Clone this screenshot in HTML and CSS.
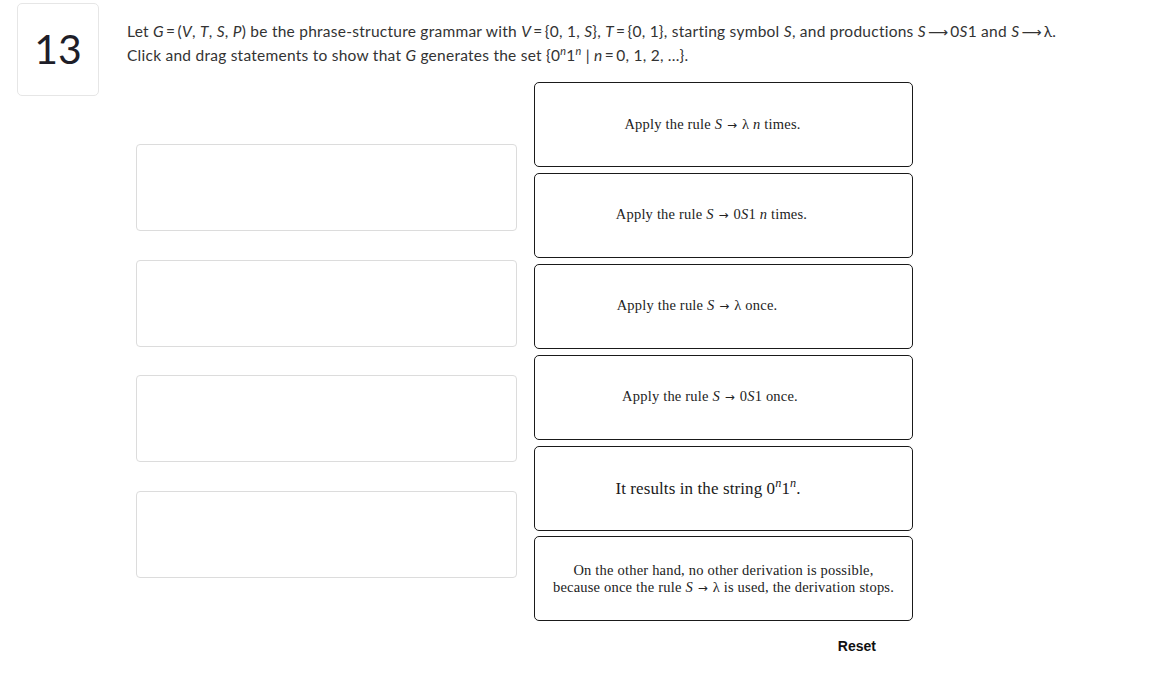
FILE: index.html
```html
<!DOCTYPE html>
<html lang="en">
<head>
<meta charset="utf-8">
<title>Question 13</title>
<link rel="stylesheet" href="styles.css">
</head>
<body>
<div class="page">
  <div class="qnum">13</div>
  <div class="content">
    <div class="prompt">
      <p>Let <i>G</i>&#8201;=&#8201;(<i>V</i>, <i>T</i>, <i>S</i>, <i>P</i>) be the phrase-structure grammar with <i>V</i>&#8201;=&#8201;{0, 1, <i>S</i>}, <i>T</i>&#8201;=&#8201;{0, 1}, starting symbol <i>S</i>, and productions <i>S</i>&#8201;<span class="arrow">⟶</span>&#8201;0<i>S</i>1 and <i>S</i>&#8201;<span class="arrow">⟶</span>&#8201;λ.</p>
      <p>Click and drag statements to show that <i>G</i> generates the set {0<sup><i>n</i></sup>1<sup><i>n</i></sup> | <i>n</i>&#8201;=&#8201;0, 1, 2, ...}.</p>
    </div>
    <div class="workspace">
      <div class="targets">
        <div class="slot"></div>
        <div class="slot"></div>
        <div class="slot"></div>
        <div class="slot"></div>
      </div>
      <div class="cards">
        <div class="card"><span class="stmt shift-1">Apply the rule <i>S</i> <span class="rel">→</span> λ <i>n</i> times.</span></div>
        <div class="card"><span class="stmt shift-2">Apply the rule <i>S</i> <span class="rel">→</span> 0<i>S</i>1 <i>n</i> times.</span></div>
        <div class="card"><span class="stmt shift-3">Apply the rule <i>S</i> <span class="rel">→</span> λ once.</span></div>
        <div class="card"><span class="stmt shift-4">Apply the rule <i>S</i> <span class="rel">→</span> 0<i>S</i>1 once.</span></div>
        <div class="card"><span class="stmt big shift-5">It results in the string 0<sup><i>n</i></sup>1<sup><i>n</i></sup>.</span></div>
        <div class="card"><span class="stmt two-line">On the other hand, no other derivation is possible,<br>because once the rule <i>S</i> <span class="rel">→</span> λ is used, the derivation stops.</span></div>
      </div>
    </div>
    <div class="footer">
      <button class="reset" type="button">Reset</button>
    </div>
  </div>
</div>
</body>
</html>
```

FILE: styles.css
```css
html, body {
  margin: 0;
  padding: 0;
  background: #ffffff;
}

.page {
  display: flex;
  align-items: flex-start;
  padding: 3px 0 0 17px;
  gap: 28px;
}

.qnum {
  box-sizing: border-box;
  width: 82px;
  height: 93px;
  border: 1px solid #e6e6e6;
  border-radius: 5px;
  display: flex;
  align-items: center;
  justify-content: center;
  font-family: Lato, "Open Sans", sans-serif;
  font-size: 41px;
  color: #1e1e28;
  padding-bottom: 2px;
}

.content {
  width: 786px;
  padding-top: 16px;
}

.prompt {
  font-family: Lato, "Open Sans", sans-serif;
  font-size: 15.5px;
  letter-spacing: 0.25px;
  line-height: 24px;
  color: #333333;
  white-space: nowrap;
}

.prompt p {
  margin: 0;
}

.prompt sup {
  font-size: 0.7em;
  line-height: 0;
  vertical-align: 0.55em;
}

.prompt .arrow {
  font-family: "DejaVu Sans", sans-serif;
  font-size: 0.9em;
  line-height: 1;
  letter-spacing: 0;
}

.workspace {
  display: flex;
  align-items: flex-start;
  margin-top: 15px;
  padding-left: 9px;
  gap: 17px;
}

.targets {
  width: 381px;
  padding-top: 62px;
  display: flex;
  flex-direction: column;
  gap: 28.7px;
}

.slot {
  box-sizing: border-box;
  height: 87px;
  border: 1px solid #dcdcdc;
  border-radius: 4px;
}

.cards {
  width: 379px;
  display: flex;
  flex-direction: column;
  gap: 5.9px;
}

.card {
  box-sizing: border-box;
  height: 85px;
  border: 1px solid #1a1a1a;
  border-radius: 5px;
  display: flex;
  align-items: center;
  justify-content: center;
  text-align: center;
  font-family: "Liberation Serif", "DejaVu Serif", serif;
  font-size: 14.5px;
  letter-spacing: 0.2px;
  line-height: 17px;
  color: #222222;
}

.stmt .rel {
  font-family: "DejaVu Sans", sans-serif;
  font-size: 0.82em;
  margin: 0 1px;
}

.stmt sup {
  font-size: 0.72em;
  line-height: 0;
  vertical-align: 0.55em;
}

.stmt.big {
  font-size: 17px;
  letter-spacing: 0.1px;
  color: #1a1a1a;
}

.stmt.two-line {
  padding-top: 2px;
}

.shift-1 {
  padding-right: 22px;
}

.shift-2 {
  padding-right: 24px;
}

.shift-3 {
  padding-right: 53px;
}

.shift-4 {
  padding-right: 27px;
}

.shift-5 {
  padding-right: 31px;
}

.footer {
  display: flex;
  justify-content: flex-end;
  padding-right: 37px;
  margin-top: 17px;
}

.reset {
  border: none;
  background: transparent;
  padding: 0;
  font-family: "Liberation Sans", Arial, sans-serif;
  font-weight: bold;
  font-size: 14px;
  line-height: 17px;
  color: #111111;
  cursor: pointer;
}
```
